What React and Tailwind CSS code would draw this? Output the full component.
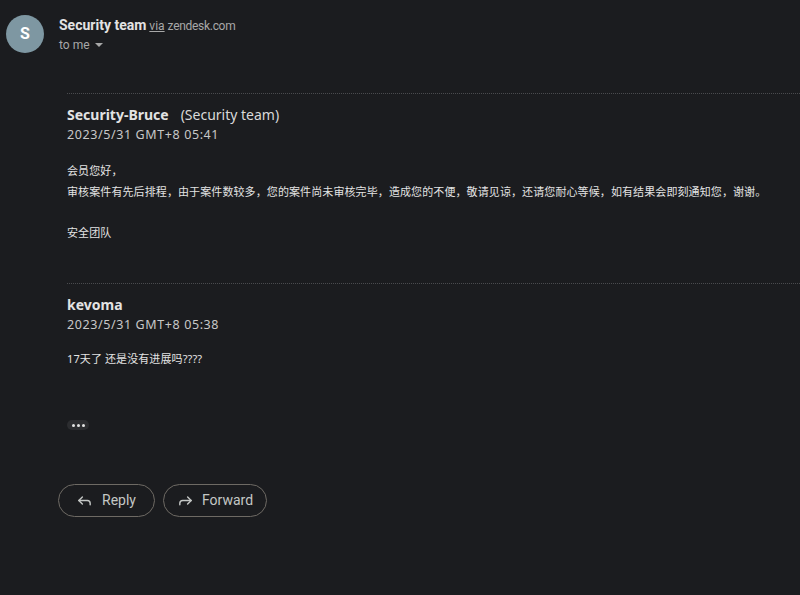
import { Forward, Reply } from "lucide-react";

const messages = [
  {
    name: "Security-Bruce",
    team: "(Security team)",
    date: "2023/5/31 GMT+8 05:41",
    gap: "mt-[16px]",
    lines: [
      "会员您好，",
      "审核案件有先后排程，由于案件数较多，您的案件尚未审核完毕，造成您的不便，敬请见谅，还请您耐心等候，如有结果会即刻通知您，谢谢。",
      "",
      "安全团队",
    ],
  },
  {
    name: "kevoma",
    date: "2023/5/31 GMT+8 05:38",
    gap: "mt-[14px]",
    lines: ["17天了 还是没有进展吗????"],
  },
];

const App = () => {
  return (
    <main className="w-[800px] h-[595px] overflow-hidden bg-[#1b1c1f] text-[#e3e3e3] font-['Roboto','Noto_Sans_CJK_SC',sans-serif]">
      {/* HEADER */}
      <div className="flex items-start pl-[6px] pt-[15px]">
        <div className="w-[38px] h-[38px] rounded-full bg-[#7e97a2] flex items-center justify-center text-white text-[16px] font-bold">
          S
        </div>
        <div className="ml-[15px] pt-[1px]">
          <div className="flex items-baseline gap-[3px] text-[14px] leading-[18px]">
            <span className="font-bold text-[#e3e3e3]">Security team</span>
            <span className="text-[#a8a8a8] text-[12px] underline">via</span>
            <span className="text-[#a8a8a8] text-[12px] tracking-[-0.3px]">zendesk.com</span>
          </div>
          <div className="flex items-center gap-[5px] text-[12px] leading-[18px] text-[#a8a8a8] mt-[1px]">
            to me
            <svg width="8" height="4" viewBox="0 0 8 4">
              <path d="M0 0h8L4 4z" fill="#a8a8a8" />
            </svg>
          </div>
        </div>
      </div>

      {/* BODY */}
      <div className="pl-[67px] mt-[39px] font-['Noto_Sans','Noto_Sans_CJK_SC',sans-serif]">
        {messages.map((m, i) => (
          <div key={m.name} className={i === 0 ? "h-[190px]" : ""}>
            <div className="border-t border-dotted border-[#4a4b4e]" />
            <div className="pt-[11px] flex items-baseline text-[14px] leading-[20px]">
              <span className="font-bold text-[#e3e3e3]">{m.name}</span>
              {m.team && <span className="ml-[12px] text-[#d9d9d9]">{m.team}</span>}
            </div>
            <div className="text-[12.5px] leading-[18px] text-[#c8c8c8] mt-[1px] tracking-[0.6px]">
              {m.date}
            </div>
            <div className={`${m.gap} text-[11px] leading-[21px] tracking-[0.1px] text-[#e3e3e3]`}>
              {m.lines.map((l, j) => (
                <div key={j} className={l === "" ? "h-[20px]" : ""}>
                  {l}
                </div>
              ))}
            </div>
          </div>
        ))}

        <div className="mt-[51px] w-[22px] h-[10px] rounded-full bg-[#2c2d30] flex items-center justify-center gap-[2px]">
          <span className="w-[3px] h-[3px] rounded-full bg-[#e3e3e3]" />
          <span className="w-[3px] h-[3px] rounded-full bg-[#e3e3e3]" />
          <span className="w-[3px] h-[3px] rounded-full bg-[#e3e3e3]" />
        </div>
      </div>

      {/* ACTIONS */}
      <div className="flex gap-[8px] pl-[58px] mt-[54px] font-['Roboto',sans-serif]">
        <button className="h-[33px] w-[97px] rounded-full border border-[#6e6a64] flex items-center pl-[17px] gap-[9px] text-[14px] text-[#c4c7c5]">
          <Reply size={17} strokeWidth={2} />
          Reply
        </button>
        <button className="h-[33px] w-[104px] rounded-full border border-[#6e6a64] flex items-center pl-[13px] gap-[8px] text-[14px] text-[#c4c7c5]">
          <Forward size={17} strokeWidth={2} />
          Forward
        </button>
      </div>
    </main>
  );
};

export default App;
